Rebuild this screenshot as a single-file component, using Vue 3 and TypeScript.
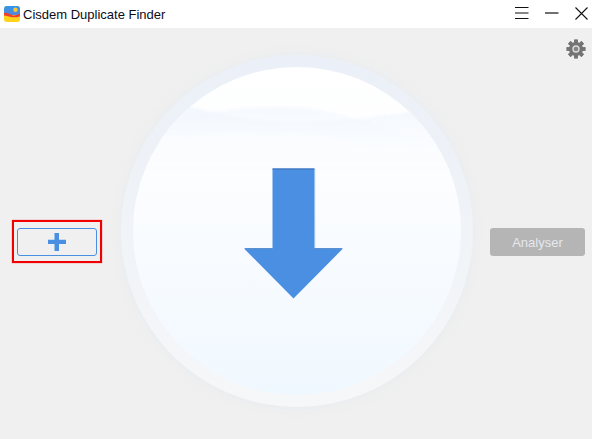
<script setup lang="ts">
const appTitle: string = 'Cisdem Duplicate Finder'
const teeth: number[] = [0, 45, 90, 135, 180, 225, 270, 315]
</script>

<template>
  <div class="window">
    <header class="titlebar">
      <svg class="logo" width="16" height="16" viewBox="0 0 16 16">
        <defs>
          <clipPath id="logoClip"><rect x="0" y="0" width="16" height="16" rx="3" /></clipPath>
          <linearGradient id="logoSky" x1="0" y1="0" x2="0" y2="1">
            <stop offset="0" stop-color="#2f97ea" />
            <stop offset="1" stop-color="#5a86d6" />
          </linearGradient>
        </defs>
        <g clip-path="url(#logoClip)">
          <rect width="16" height="16" fill="#ffd21c" />
          <rect width="16" height="9" fill="url(#logoSky)" />
          <path d="M0 7 C4 6 6 9 9 9.5 S14 8 16 7.5 V10.5 C12 11.5 10 11.5 7 11 S2 9.5 0 9.5Z" fill="#ee4030" />
          <circle cx="11.5" cy="3.8" r="2.2" fill="#f5c93a" />
        </g>
      </svg>
      <span class="title">{{ appTitle }}</span>
      <div class="controls">
        <svg width="14" height="12" viewBox="0 0 14 12" class="menu-icon">
          <path d="M0 .5H13.5M0 6H13.5M0 11.5H13.5" stroke="#111" stroke-width="1" fill="none" />
        </svg>
        <svg width="14" height="2" viewBox="0 0 14 2" class="min-icon">
          <path d="M0 1H13.5" stroke="#111" stroke-width="1.2" fill="none" />
        </svg>
        <svg width="13" height="13" viewBox="0 0 13 13" class="close-icon">
          <path d="M.5 .5L12.5 12.5M12.5 .5L.5 12.5" stroke="#111" stroke-width="1.1" fill="none" />
        </svg>
      </div>
    </header>

    <main class="content">
      <div class="left">
        <div class="highlight">
          <button class="add" type="button" aria-label="Add">
            <svg width="18" height="18" viewBox="0 0 18 18">
              <path d="M6.5 0H11V6.7H18V11H11V18H6.5V11H0V6.7H6.5Z" fill="#4a90e2" />
            </svg>
          </button>
        </div>
      </div>

      <div class="disc-outer">
        <div class="disc-inner">
          <svg class="waves" width="328" height="328" viewBox="0 0 328 328">
            <defs>
              <linearGradient id="bandA" x1="0" y1="0" x2="0" y2="1">
                <stop offset="0" stop-color="#eef5fd" stop-opacity=".9" />
                <stop offset="1" stop-color="#f6faff" stop-opacity="0" />
              </linearGradient>
              <linearGradient id="bandB" x1="0" y1="0" x2="0" y2="1">
                <stop offset="0" stop-color="#f3f8fe" stop-opacity=".8" />
                <stop offset="1" stop-color="#fbfdff" stop-opacity="0" />
              </linearGradient>
            </defs>
            <path d="M44 51 C90 42 120 40 150 40 C180 40 200 46 217 50 C250 58 280 68 304 75 L328 110 H0 V70Z" fill="url(#bandB)" />
            <path d="M40 36 C90 48 120 55 164 55 C210 55 260 47 300 42 L328 66 C300 90 240 92 200 70 C150 62 90 66 0 72Z" fill="url(#bandA)" />
          </svg>
          <svg class="arrow" width="100" height="131" viewBox="0 0 100 131">
            <path d="M28.5 0.5H70.5V80.5H99L49.5 130.5L0 80.5H28.5Z" fill="#4a8fe2" />
            <path d="M28.5 1H70.5" stroke="#3a6fb4" stroke-width="1" fill="none" />
            <path d="M70.7 1V80" stroke="#8db9ec" stroke-width=".7" fill="none" />
            <path d="M1 80.5H28.5M70.5 80.5H98" stroke="#3f78bf" stroke-width="1" opacity=".7" fill="none" />
          </svg>
        </div>
      </div>

      <div class="right">
        <svg class="gear" width="20" height="20" viewBox="0 0 20 20">
          <rect v-for="deg in teeth" :key="deg" x="8.2" y="0.6" width="3.6" height="18.8" fill="#747474" :transform="`rotate(${deg} 10 10)`" />
          <circle cx="10" cy="10" r="7" fill="#747474" />
          <circle cx="10" cy="10" r="3.7" fill="#dcdcdc" />
          <circle cx="10" cy="10" r="2.3" fill="#858585" />
        </svg>
        <button class="analyse" type="button" disabled>Analyser</button>
      </div>
    </main>
  </div>
</template>

<style scoped>
.window {
  width: 592px;
  height: 439px;
  display: flex;
  flex-direction: column;
  overflow: hidden;
  background: #f0f0f0;
  font-family: "Liberation Sans", Arial, sans-serif;
}
.titlebar {
  height: 28px;
  flex: none;
  display: flex;
  align-items: center;
  background: #fff;
  padding-left: 4px;
}
.logo { flex: none; margin-bottom: 1px; }
.title {
  margin-left: 3px;
  font-size: 13px;
  color: #0b0b1a;
  white-space: nowrap;
}
.controls {
  margin-left: auto;
  display: flex;
  align-items: center;
  padding-right: 4px;
}
.menu-icon { margin-right: 16px; margin-top: -2px; }
.min-icon { margin-right: 16px; margin-top: -3px; }
.close-icon { margin-right: 0; margin-top: -2px; }
.content {
  flex: 1;
  display: grid;
  grid-template-columns: 121px 352px 119px;
  align-items: start;
}
.left { padding: 192px 0 0 12px; }
.highlight {
  width: 90px;
  height: 43px;
  box-sizing: border-box;
  border: 2px solid #f00000;
  box-shadow: 0 0 1px rgba(255, 0, 0, .7);
  padding: 6px 3px 0 3px;
}
.add {
  width: 80px;
  height: 28px;
  padding: 0;
  margin: 0;
  background: #f0f0f0;
  border: 1px solid #4a90e2;
  border-radius: 3px;
  display: flex;
  align-items: center;
  justify-content: center;
}
.disc-outer {
  margin-top: 27px;
  width: 352px;
  height: 352px;
  box-sizing: border-box;
  padding: 12px;
  border-radius: 50%;
  background: linear-gradient(180deg, #ebf0f8 0%, #f0f3f7 50%, #f6f7f9 100%);
  box-shadow: 0 0 10px rgba(222, 229, 238, .55);
}
.disc-inner {
  position: relative;
  width: 328px;
  height: 328px;
  border-radius: 50%;
  overflow: hidden;
  background: linear-gradient(180deg, #ffffff 0%, #fcfdff 35%, #f0f8ff 100%);
  display: flex;
  justify-content: center;
}
.waves { position: absolute; left: 0; top: 0; filter: blur(1px); }
.arrow { position: relative; margin-top: 101px; margin-right: 6px; }
.right {
  display: flex;
  flex-direction: column;
  align-items: flex-end;
  padding-right: 7px;
}
.gear { margin-top: 11px; margin-right: -1px; }
.analyse {
  margin-top: 169px;
  width: 95px;
  height: 28px;
  padding: 0;
  border: none;
  border-radius: 3px;
  background: #b5b5b5;
  color: #e4e8ee;
  font-family: "Liberation Sans", Arial, sans-serif;
  font-size: 13px;
}
</style>
